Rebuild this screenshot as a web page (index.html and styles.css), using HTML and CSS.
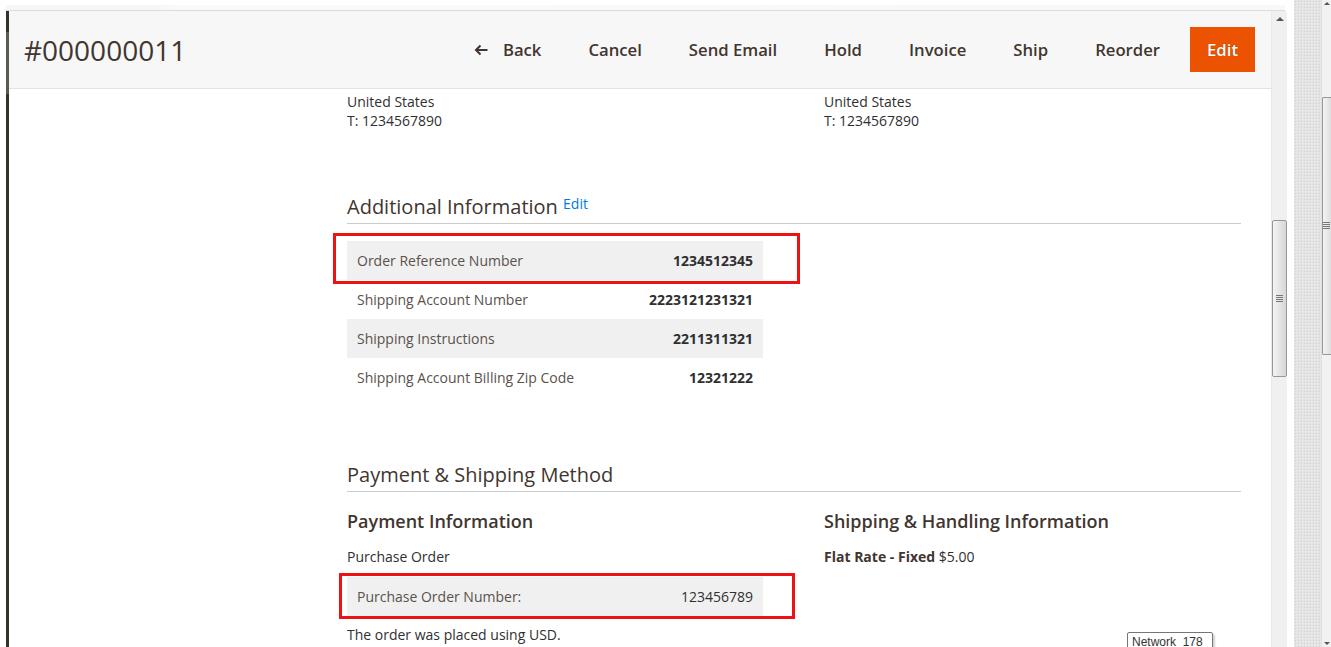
FILE: index.html
```html
<!DOCTYPE html>
<html lang="en">
<head>
<meta charset="utf-8">
<title>#000000011</title>
<link rel="stylesheet" href="styles.css">
</head>
<body>
<div class="screen">
  <div class="app">
    <div class="topstrip"><div class="strip"></div></div>
    <div class="window">
      <div class="frame">
        <main class="page">
          <header class="page-header">
            <h1 class="page-title">#000000011</h1>
            <nav class="actions">
              <button class="btn back"><svg class="back-icon" width="14" height="12" viewBox="0 0 14 12"><path d="M13.5 6H2 M6.5 1.5L2 6l4.5 4.5" fill="none" stroke="currentColor" stroke-width="2"/></svg>Back</button>
              <button class="btn">Cancel</button>
              <button class="btn">Send Email</button>
              <button class="btn">Hold</button>
              <button class="btn">Invoice</button>
              <button class="btn">Ship</button>
              <button class="btn">Reorder</button>
              <button class="btn primary">Edit</button>
            </nav>
          </header>
          <div class="content">
            <section class="two-cols address">
              <address class="addr"><span>United States</span><span>T: 1234567890</span></address>
              <address class="addr"><span>United States</span><span>T: 1234567890</span></address>
            </section>

            <section class="section">
              <h2 class="section-title">Additional Information <a class="edit-link">Edit</a></h2>
              <div class="info-table">
                <div class="row striped marked-a"><span class="label">Order Reference Number</span><span class="value">1234512345</span></div>
                <div class="row"><span class="label">Shipping Account Number</span><span class="value">2223121231321</span></div>
                <div class="row striped"><span class="label">Shipping Instructions</span><span class="value">2211311321</span></div>
                <div class="row"><span class="label">Shipping Account Billing Zip Code</span><span class="value">12321222</span></div>
              </div>
            </section>

            <section class="section section-payment">
              <h2 class="section-title">Payment &amp; Shipping Method</h2>
              <div class="two-cols">
                <div class="col">
                  <h3 class="sub-title">Payment Information</h3>
                  <p class="text">Purchase Order</p>
                  <div class="info-table po-table">
                    <div class="row striped marked-b"><span class="label">Purchase Order Number:</span><span class="value plain">123456789</span></div>
                  </div>
                  <p class="text after-table">The order was placed using USD.</p>
                </div>
                <div class="col">
                  <h3 class="sub-title">Shipping &amp; Handling Information</h3>
                  <p class="text"><strong>Flat Rate - Fixed</strong> $5.00</p>
                </div>
              </div>
            </section>
          </div>
          <div class="tooltip">Network&nbsp; 178</div>
        </main>
        <div class="vscroll">
          <span class="arrow-up"></span>
          <span class="thumb"><span class="grip"></span></span>
        </div>
      </div>
    </div>
  </div>
  <div class="gutter"></div>
  <div class="texture"></div>
  <div class="outer-scroll">
    <span class="o-arrow-up"></span>
    <span class="o-thumb"><span class="grip"></span></span>
    <span class="o-arrow-down"></span>
  </div>
</div>
</body>
</html>
```

FILE: styles.css
```css
* { box-sizing: border-box; }
html, body { margin: 0; padding: 0; }
body {
  width: 1331px;
  height: 647px;
  overflow: hidden;
  background: #fff;
  font-family: "Open Sans", "Liberation Sans", sans-serif;
  color: #303030;
}
.screen { display: flex; width: 1331px; height: 647px; }

.app { flex: 0 0 1287px; display: flex; flex-direction: column; height: 647px; }
.topstrip { height: 11px; background: #fff; padding-top: 5px; }
.strip {
  height: 6px;
  margin-left: 6px;
  margin-right: 2px;
  background: linear-gradient(to right, #f6f6f6 0, #f6f6f6 150px, #f9f9f9 170px, #f8f8f8 100%);
  border-bottom: 1px solid #dcdcdc;
}
.window { flex: 1; padding-left: 6px; display: flex; min-height: 0; }
.frame {
  flex: 1;
  display: flex;
  min-height: 0;
  border-left: 3px solid #36312d;
  border-image: linear-gradient(to bottom, #36312d 0, #36312d 22px, #5e5854 22px, #5e5854 84px, #36312d 84px, #36312d 100%) 1;
}

.page { flex: 1; position: relative; overflow: hidden; background: #fff; }

.page-header {
  height: 78px;
  background: #f7f7f7;
  border-bottom: 1px solid #e3e3e3;
  display: flex;
  align-items: center;
  justify-content: space-between;
  padding: 0 16px 0 15px;
}
.page-title {
  margin: 0;
  font-size: 28px;
  font-weight: 400;
  color: #41362f;
  line-height: 38px;
}
.actions { display: flex; align-items: center; gap: 13px; }
.btn {
  height: 45px;
  padding: 0 17px;
  border: 0;
  background: transparent;
  font-family: "Open Sans", "Liberation Sans", sans-serif;
  font-size: 16.7px;
  font-weight: 600;
  color: #41362f;
  display: flex;
  align-items: center;
  cursor: pointer;
}
.back-icon { margin-right: 15px; margin-top: 1px; }
.btn.primary {
  padding: 0 17px;
  background: #eb5202;
  color: #fff;
  text-shadow: 0 0 1px rgba(0,0,0,0.35);
}

.content { padding: 3px 30px 0 338px; }
.two-cols { display: grid; grid-template-columns: 477px 1fr; }
.addr { font-style: normal; font-size: 14px; line-height: 19px; display: flex; flex-direction: column; color: #303030; }

.section { margin-top: 65px; }
.section-payment { margin-top: 66px; }
.section-title {
  margin: 0;
  font-size: 20px;
  font-weight: 400;
  line-height: 24px;
  color: #41362f;
  padding-bottom: 4px;
  border-bottom: 1px solid #cccccc;
}
.edit-link {
  font-size: 14px;
  line-height: 1;
  color: #007bdb;
  position: relative;
  top: -5px;
  cursor: pointer;
}

.info-table { width: 416px; margin-top: 17px; font-size: 14px; }
.row {
  height: 39px;
  display: flex;
  align-items: center;
  justify-content: space-between;
  padding: 0 10px;
}
.row.striped { background: #f0f0f0; }
.label { color: #5a524d; }
.value { font-weight: 700; color: #303030; }
.value.plain { font-weight: 400; }

.marked-a, .marked-b { position: relative; }
.marked-a::after, .marked-b::after {
  content: "";
  position: absolute;
  border: 3px solid #ee1111;
  pointer-events: none;
}
.marked-a::after { left: -14px; right: -37px; top: -8px; bottom: -4px; }
.marked-b::after { left: -8px; right: -32px; top: -4px; bottom: -3px; }

.sub-title {
  margin: 17px 0 0;
  font-size: 18px;
  font-weight: 600;
  line-height: 24px;
  color: #41362f;
}
.text { margin: 14px 0 0; font-size: 14px; line-height: 19px; color: #303030; }
.text strong { font-weight: 700; color: #41362f; }
.po-table { margin-top: 11px; }
.text.after-table { margin-top: 9px; }

.tooltip {
  position: absolute;
  left: 1118px;
  top: 621px;
  height: 20px;
  padding: 1px 9px 0 4px;
  border: 1px solid #767676;
  border-radius: 2px;
  background: #fff;
  box-shadow: 2px 2px 2px rgba(0,0,0,0.18);
  font-family: "Liberation Sans", "DejaVu Sans", sans-serif;
  font-size: 12px;
  line-height: 16px;
  color: #333;
  white-space: nowrap;
}

.vscroll {
  flex: 0 0 16px;
  background: #f0f0f0;
  border-left: 1px solid #e8e8e8;
  position: relative;
}
.arrow-up {
  position: absolute;
  left: 4px;
  top: 6px;
  border-left: 4px solid transparent;
  border-right: 4px solid transparent;
  border-bottom: 4px solid #555;
}
.thumb {
  position: absolute;
  left: 0;
  right: 0;
  top: 209px;
  height: 157px;
  border: 1px solid #979797;
  border-radius: 2px;
  background: linear-gradient(to right, #f4f4f4, #e2e2e2 60%, #d6d6d6);
}
.grip {
  position: absolute;
  left: 50%;
  top: 50%;
  width: 7px;
  height: 7px;
  margin: -4px 0 0 -4px;
  background: repeating-linear-gradient(to bottom, #777 0, #777 1px, transparent 1px, transparent 2px);
}

.gutter { flex: 0 0 7px; background: #fff; }
.texture {
  flex: 0 0 27px;
  background-color: #e4e4e4;
  background-image:
    radial-gradient(circle, #d2d2d2 0.6px, transparent 0.8px),
    radial-gradient(circle, #eeeeee 0.6px, transparent 0.8px);
  background-size: 3px 3px, 3px 3px;
  background-position: 0 0, 1px 1px;
}
.outer-scroll {
  flex: 0 0 10px;
  position: relative;
  background: #f2f2f2;
  border-left: 1px solid #e0e0e0;
}
.o-arrow-up, .o-arrow-down {
  position: absolute;
  left: 2px;
  border-left: 3px solid transparent;
  border-right: 3px solid transparent;
}
.o-arrow-up { top: 2px; border-bottom: 3px solid #555; }
.o-arrow-down { bottom: 2px; border-top: 3px solid #555; }
.o-thumb {
  position: absolute;
  left: 0;
  right: 0;
  top: 97px;
  height: 258px;
  border: 1px solid #979797;
  border-right: 0;
  border-radius: 2px 0 0 2px;
  background: linear-gradient(to right, #f4f4f4, #dedede);
}
```
